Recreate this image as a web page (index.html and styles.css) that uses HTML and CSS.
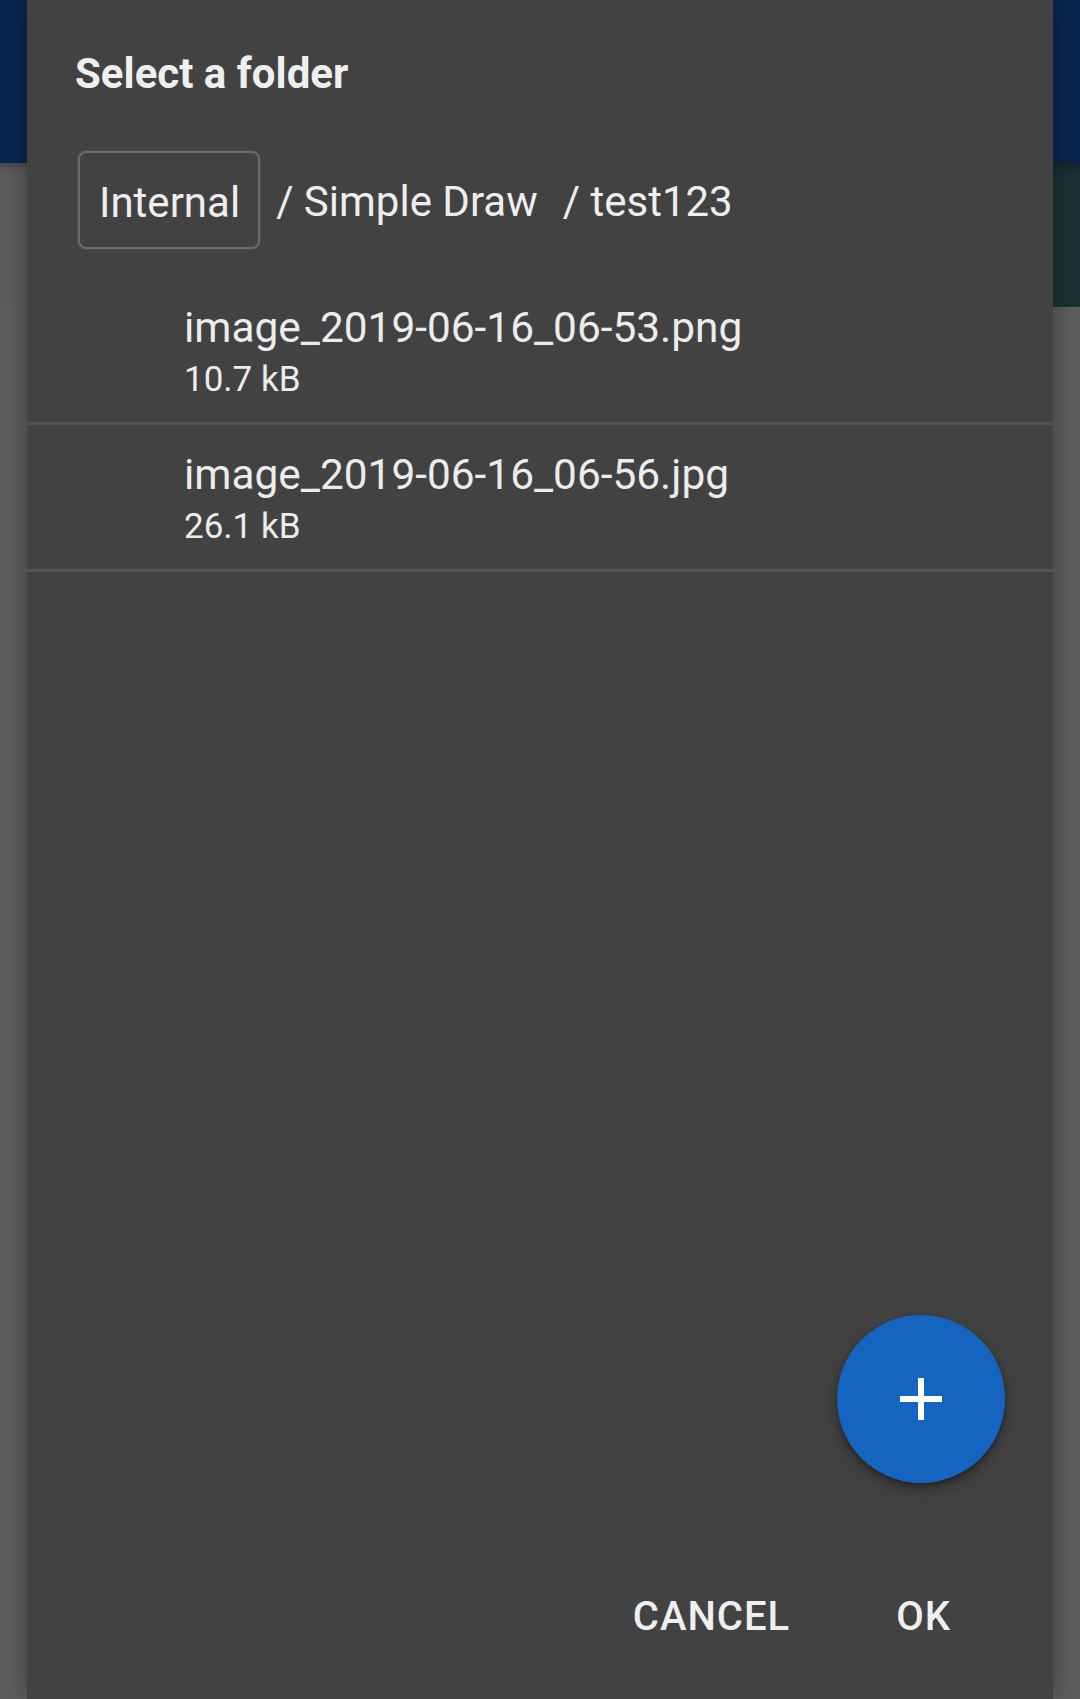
FILE: index.html
```html
<!DOCTYPE html>
<html>
<head>
<meta charset="utf-8">
<link rel="stylesheet" href="styles.css">
</head>
<body>
<div class="app">
  <div class="appbar"></div>
  <div class="subbar"></div>
  <div class="content"></div>
</div>

<div class="dialog">
  <h1 class="title">Select a folder</h1>
  <div class="crumbs">
    <span class="crumb crumb-root">Internal</span>
    <span class="crumb crumb-mid">/ Simple Draw</span>
    <span class="crumb crumb-last">/ test123</span>
  </div>
  <ul class="files">
    <li class="file">
      <div class="file-name">image_2019-06-16_06-53.png</div>
      <div class="file-size">10.7 kB</div>
    </li>
    <li class="file">
      <div class="file-name">image_2019-06-16_06-56.jpg</div>
      <div class="file-size">26.1 kB</div>
    </li>
  </ul>
  <div class="actions">
    <span class="btn">CANCEL</span>
    <span class="btn">OK</span>
  </div>
  <div class="fab">
    <svg width="42" height="42" viewBox="0 0 42 42"><rect x="18" y="0" width="6" height="42" fill="#fff"/><rect x="0" y="18" width="42" height="6" fill="#fff"/></svg>
  </div>
</div>
</body>
</html>
```
FILE: styles.css
```css
html, body {
  margin: 0;
  padding: 0;
  width: 1080px;
  height: 1699px;
  overflow: hidden;
  background: #5d5d5d;
  font-family: "Roboto", "Liberation Sans", sans-serif;
}

.app {
  display: flex;
  flex-direction: column;
  height: 1699px;
}

.appbar {
  height: 163px;
  background: #08264f;
}

.subbar {
  height: 144px;
  background: linear-gradient(to right, #5d5d5d 50%, #1b3134 50%);
  box-shadow: inset 0 8px 10px -6px rgba(0,0,0,0.35);
}

.content {
  flex: 1;
  background: #5e5e5e;
}

.dialog {
  position: absolute;
  top: 0;
  left: 27px;
  width: 1026px;
  height: 1699px;
  background: #424242;
  box-shadow: 0 0 24px rgba(0,0,0,0.35);
  display: flex;
  flex-direction: column;
  color: #eeeeee;
}

.title {
  margin: 0;
  padding: 49px 0 0 48px;
  font-size: 42px;
  line-height: 50px;
  font-weight: 700;
  color: #efefef;
}

.crumbs {
  display: flex;
  align-items: center;
  margin-top: 52px;
  padding-left: 51px;
  font-size: 42px;
  line-height: 50px;
}

.crumb-root {
  border: 2px solid #6c6c6c;
  border-radius: 8px;
  box-shadow: 0 0 2px rgba(120,120,120,0.6);
  padding: 25px 18px 19px 19px;
}

.crumb-mid {
  margin-left: 16px;
  padding-top: 4px;
}

.crumb-last {
  margin-left: 25px;
  padding-top: 4px;
}

.files {
  list-style: none;
  margin: 29px 0 0 0;
  padding: 0;
  flex: 1;
}

.file {
  padding: 25px 0 21px 157px;
  border-bottom: 3px solid #535353;
}

.file-name {
  font-size: 42.4px;
  line-height: 50px;
  color: #ececec;
}

.file-size {
  margin-top: 6px;
  font-size: 35px;
  line-height: 42px;
  color: #ececec;
}

.actions {
  display: flex;
  justify-content: flex-end;
  gap: 106px;
  padding: 0 102px 60px 0;
  font-size: 40px;
  line-height: 45px;
  font-weight: 500;
  letter-spacing: 1px;
  color: #efefef;
}

.fab {
  position: absolute;
  left: 810px;
  top: 1315px;
  width: 168px;
  height: 168px;
  border-radius: 50%;
  background: #1565c0;
  box-shadow: 0 6px 14px rgba(0,0,0,0.35), 0 2px 4px rgba(0,0,0,0.25);
  display: flex;
  align-items: center;
  justify-content: center;
}
```
